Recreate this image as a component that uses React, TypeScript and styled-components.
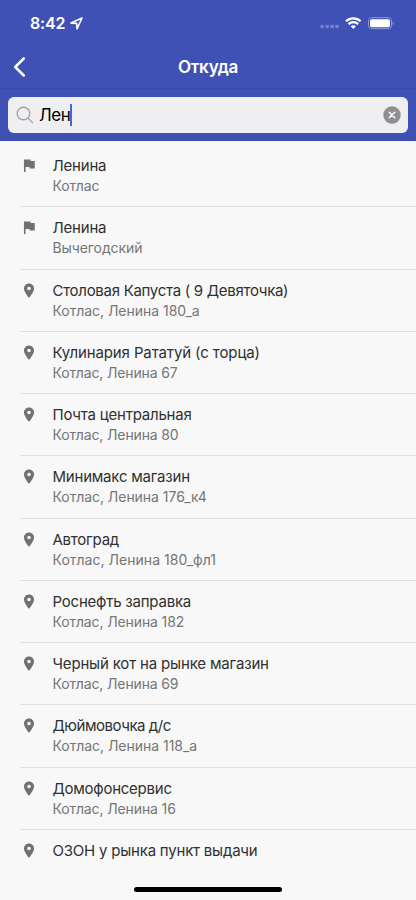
import React from 'react';
import styled, { createGlobalStyle } from 'styled-components';

const GlobalStyle = createGlobalStyle`
  * { box-sizing: border-box; }
  body { margin: 0; background: #f8f8f8; font-family: Inter, "Noto Sans", sans-serif; }
`;

const Screen = styled.main`
  position: relative;
  width: 416px;
  height: 900px;
  overflow: hidden;
  display: flex;
  flex-direction: column;
  background: #f8f8f8;
`;

const StatusBar = styled.div`
  height: 45px;
  flex: none;
  display: flex;
  align-items: center;
  background: #3f51b5;
  padding: 1px 22px 0 30px;
  color: #fff;
`;

const Clock = styled.span`
  width: 36px;
  font-size: 16px;
  font-weight: 600;
  letter-spacing: -0.2px;
  white-space: nowrap;
`;

const LocationIcon = styled.svg`
  margin-left: 4px;
`;

const StatusIcons = styled.div`
  display: flex;
  align-items: center;
  margin-left: auto;
`;

const NavBar = styled.header`
  height: 43px;
  flex: none;
  display: grid;
  grid-template-columns: 60px 1fr 60px;
  align-items: center;
  background: #3f51b5;
  color: #fff;
`;

const BackButton = styled.button`
  display: flex;
  border: 0;
  padding: 0 0 0 13px;
  background: none;
`;

const Title = styled.h1`
  margin: 0;
  font-size: 17px;
  line-height: 22px;
  font-weight: 600;
  letter-spacing: -0.25px;
  text-align: center;
`;

const SearchArea = styled.div`
  height: 53px;
  flex: none;
  padding: 8px 8px;
  background: #3f51b5;
  border-top: 1px solid #394aa8;
  border-bottom: 1px solid #394aa8;
`;

const SearchField = styled.div`
  height: 36px;
  display: flex;
  align-items: center;
  padding: 0 7px 0 8px;
  border-radius: 6px;
  background: #efeff1;
`;

const Query = styled.span`
  margin-left: 5px;
  font-size: 17px;
  line-height: 24px;
  letter-spacing: -0.4px;
  color: #000;
`;

const Caret = styled.span`
  width: 2px;
  height: 22px;
  margin-left: -0.5px;
  background: #4565e0;
`;

const ClearButton = styled.button`
  display: flex;
  margin-left: auto;
  padding: 0;
  border: 0;
  background: none;
`;

const Results = styled.ul`
  margin: 0;
  padding: 4.2px 0 0;
  list-style: none;
`;

const Row = styled.li`
  height: 62.25px;
  display: flex;
  margin-left: 20px;
  border-bottom: 1px solid #dedfe1;

  &:last-child {
    border-bottom: 0;
  }
`;

const IconSlot = styled.div`
  width: 32.5px;
  flex: none;
  padding-top: 12px;
`;

const Labels = styled.div`
  padding-top: 11px;
  white-space: nowrap;
`;

const Name = styled.div<{ $tracking: number }>`
  font-size: 15px;
  line-height: 20px;
  letter-spacing: ${(p) => p.$tracking}px;
  color: #303030;
`;

const Address = styled.div<{ $tracking: number }>`
  font-size: 14px;
  line-height: 20px;
  letter-spacing: ${(p) => p.$tracking}px;
  color: #757575;
`;

const HomeIndicator = styled.div`
  position: absolute;
  left: 134px;
  bottom: 8.5px;
  width: 148px;
  height: 5px;
  border-radius: 3px;
  background: #000;
`;

type Kind = 'flag' | 'pin';
interface Place { kind: Kind; name: string; address: string; nt: number; at: number }

const places: Place[] = [
  { kind: 'flag', name: 'Ленина', address: 'Котлас', nt: -0.2, at: -0.15 },
  { kind: 'flag', name: 'Ленина', address: 'Вычегодский', nt: -0.2, at: -0.1 },
  { kind: 'pin', name: 'Столовая Капуста ( 9 Девяточка)', address: 'Котлас, Ленина 180_а', nt: -0.29, at: -0.03 },
  { kind: 'pin', name: 'Кулинария Рататуй (с торца)', address: 'Котлас, Ленина 67', nt: -0.12, at: -0.15 },
  { kind: 'pin', name: 'Почта центральная', address: 'Котлас, Ленина 80', nt: -0.22, at: -0.14 },
  { kind: 'pin', name: 'Минимакс магазин', address: 'Котлас, Ленина 176_к4', nt: -0.22, at: -0.04 },
  { kind: 'pin', name: 'Автоград', address: 'Котлас, Ленина 180_фл1', nt: -0.25, at: 0.04 },
  { kind: 'pin', name: 'Роснефть заправка', address: 'Котлас, Ленина 182', nt: -0.22, at: -0.12 },
  { kind: 'pin', name: 'Черный кот на рынке магазин', address: 'Котлас, Ленина 69', nt: -0.17, at: -0.14 },
  { kind: 'pin', name: 'Дюймовочка д/с', address: 'Котлас, Ленина 118_а', nt: -0.46, at: -0.03 },
  { kind: 'pin', name: 'Домофонсервис', address: 'Котлас, Ленина 16', nt: -0.25, at: -0.12 },
  { kind: 'pin', name: 'ОЗОН у рынка пункт выдачи', address: '', nt: -0.21, at: 0 },
];

const PlaceIcon = ({ kind }: { kind: Kind }) => (
  <svg width="18" height="18" viewBox="-0.500 0 25 25" fill="#717171" display="block">
    {kind === 'flag' ? (
      <path d="M14.4 5.500 14 3.500H5v17.500h2.200v-7h5.400l.4 2h7V5.500z" />
    ) : (
      <path d="M12 2C8.130 2 5 5.130 5 9c0 5.250 7 13 7 13s7-7.750 7-13c0-3.870-3.130-7-7-7zm0 9.500a2.500 2.500 0 0 1 0-5 2.500 2.500 0 0 1 0 5z" />
    )}
  </svg>
);

export default function App() {
  return (
    <Screen>
      <GlobalStyle />
      <StatusBar>
        <Clock>8:42</Clock>
        <LocationIcon width="13" height="13" viewBox="0 0 13 13" fill="none" stroke="#fff" strokeWidth="1.6" strokeLinejoin="round">
          <path d="M12 1 1 6.100 6.700 6.400 7 12z" />
        </LocationIcon>
        <StatusIcons>
          <svg width="96" height="16" viewBox="0 0 96 16">
            <g fill="#737fcb">
              <rect x="22.300" y="9.700" width="3.600" height="3.600" rx="1" />
              <rect x="27.300" y="9.700" width="3.600" height="3.600" rx="1" />
              <rect x="32.300" y="9.700" width="3.600" height="3.600" rx="1" />
              <rect x="37.300" y="9.700" width="3.600" height="3.600" rx="1" />
            </g>
            <g fill="none" stroke="#fff" strokeWidth="2.200">
              <path d="M48 6.200a10.600 10.600 0 0 1 14.600 0" />
              <path d="M50.500 9.100a6.900 6.900 0 0 1 9.600 0" />
            </g>
            <path d="M52.700 11.200a4.100 4.100 0 0 1 5.200 0l-2.600 2.900z" fill="#fff" />
            <rect x="70.500" y="2.700" width="23" height="11" rx="3.200" fill="none" stroke="#8f99d4" />
            <rect x="72" y="4.200" width="20" height="8" rx="1.900" fill="#fff" />
            <path d="M94.700 6.500c1.400.6 1.400 3 0 3.600z" fill="#8f99d4" />
          </svg>
        </StatusIcons>
      </StatusBar>
      <NavBar>
        <BackButton aria-label="Назад">
          <svg width="14" height="22" viewBox="0 0 14 22" fill="none" stroke="#fff" strokeWidth="2.500" strokeLinecap="round" strokeLinejoin="round">
            <path d="M10.800 2.500 2.200 11l8.600 8.500" />
          </svg>
        </BackButton>
        <Title>Откуда</Title>
      </NavBar>
      <SearchArea>
        <SearchField>
          <svg width="18" height="18" viewBox="0 0 18 18" fill="none" stroke="#a4a4a7" strokeWidth="1.400" strokeLinecap="round">
            <circle cx="7.500" cy="7.500" r="6.300" />
            <path d="m12 12 4.500 4.500" />
          </svg>
          <Query>Лен</Query>
          <Caret />
          <ClearButton aria-label="Очистить">
            <svg width="18" height="18" viewBox="0 0 18 18">
              <circle cx="9" cy="9" r="8.700" fill="#8e8e93" />
              <path d="m6.200 6.200 5.600 5.600m0-5.600-5.600 5.600" stroke="#fff" strokeWidth="1.500" strokeLinecap="round" />
            </svg>
          </ClearButton>
        </SearchField>
      </SearchArea>
      <Results>
        {places.map((p, i) => (
          <Row key={i}>
            <IconSlot><PlaceIcon kind={p.kind} /></IconSlot>
            <Labels>
              <Name $tracking={p.nt}>{p.name}</Name>
              <Address $tracking={p.at}>{p.address}</Address>
            </Labels>
          </Row>
        ))}
      </Results>
      <HomeIndicator />
    </Screen>
  );
}
